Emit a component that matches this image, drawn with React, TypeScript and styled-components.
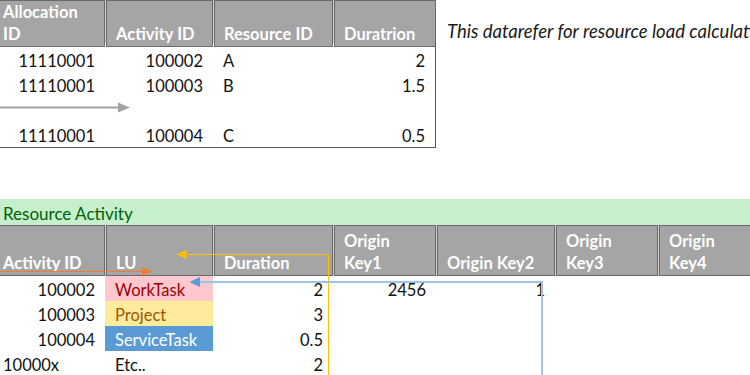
import React from 'react'
import styled, { createGlobalStyle } from 'styled-components'

const Global = createGlobalStyle`
  html, body {
    margin      : 0;
    padding     : 0;
    background  : #ffffff;
    font-family : Lato, "Open Sans", sans-serif;
    font-size   : 16.5px;
    color       : #111111;
  }
`

const Page = styled.div`
  position : relative;
  width    : 750px;
  height   : 375px;
  overflow : hidden;
`

const TopSection = styled.div`
  display     : flex;
  align-items : flex-start;
  margin-left : -7px;
`

const Note = styled.div`
  margin-left : 11px;
  padding-top : 20px;
  line-height : 22px;
  font-size   : 18.5px;
  font-style  : italic;
  white-space : nowrap;
  color       : #1a1a1a;
`

const Table = styled.div`
  display        : flex;
  flex-direction : column;
  flex-shrink    : 0;
`

const HeadRow = styled.div<{ $cols: string; $height: number }>`
  display               : grid;
  grid-template-columns : ${p => p.$cols};
  column-gap            : 1px;
  background            : #cdcdcd;
  height                : ${p => p.$height}px;
`

const HeadCell = styled.div`
  box-sizing     : border-box;
  display        : flex;
  align-items    : flex-end;
  padding        : 0 4px 1px 9px;
  border         : 1px solid #6a6a6a;
  background     : #a5a5a5;
  color          : #ffffff;
  font-weight    : 700;
  line-height    : 22px;
  white-space    : nowrap;
`

const Body = styled.div<{ $cols: string; $framed?: boolean }>`
  display               : grid;
  grid-template-columns : ${p => p.$cols};
  grid-auto-rows        : 25px;
  padding-top           : ${p => (p.$framed ? 4 : 0)}px;
  border-right          : ${p => (p.$framed ? '1px solid #555555' : 'none')};
  border-bottom         : ${p => (p.$framed ? '1px solid #555555' : 'none')};
`

type Tone = 'bad' | 'neutral' | 'accent'

const tones: Record<Tone, { bg: string; fg: string }> = {
  bad     : { bg: '#ffc7ce', fg: '#9c0006' },
  neutral : { bg: '#ffeb9c', fg: '#9c5700' },
  accent  : { bg: '#5b9bd5', fg: '#ffffff' },
}

const Cell = styled.div<{ $right?: boolean; $tone?: Tone }>`
  box-sizing  : border-box;
  padding     : 3px 10px 0 10px;
  line-height : 22px;
  white-space : nowrap;
  text-align  : ${p => (p.$right ? 'right' : 'left')};
  background  : ${p => (p.$tone ? tones[p.$tone].bg : 'transparent')};
  color       : ${p => (p.$tone ? tones[p.$tone].fg : '#111111')};
`

const Banner = styled.div`
  margin-top  : 51px;
  height      : 26px;
  box-sizing  : border-box;
  padding     : 4px 0 0 3px;
  line-height : 22px;
  font-size   : 17px;
  background  : #c6efce;
  color       : #006100;
`

const Sheet2 = styled(Table)`
  margin-left : -7px;
`

const Overlay = styled.svg`
  position       : absolute;
  left           : 0;
  top            : 0;
  pointer-events : none;
`

const topHead = '112px 107px 119px 102px'
const topBody = '112px 108px 120px 102px'
const actHead = '112px 107px 119px 102px 118px 102px 200px'
const actBody = '112px 108px 120px 103px 119px 103px 200px'

const allocations = [
  ['11110001', '100002', 'A', '2'],
  ['11110001', '100003', 'B', '1.5'],
  ['', '', '', ''],
  ['11110001', '100004', 'C', '0.5'],
]

const activities: { id: string; idRight: boolean; lu: string; tone?: Tone; dur: string; k1?: string; k2?: string }[] = [
  { id: '100002', idRight: true, lu: 'WorkTask', tone: 'bad', dur: '2', k1: '2456', k2: '1' },
  { id: '100003', idRight: true, lu: 'Project', tone: 'neutral', dur: '3' },
  { id: '100004', idRight: true, lu: 'ServiceTask', tone: 'accent', dur: '0.5' },
  { id: '10000x', idRight: false, lu: 'Etc..', dur: '2' },
]

const Arrows = () => (
  <Overlay width={750} height={375} viewBox="0 0 750 375">
    <line x1={0} y1={107.5} x2={119} y2={107.5} stroke="#a3a3a3" strokeWidth={2} />
    <polygon points="118,102.5 130,107.5 118,112.5" fill="#a3a3a3" />

    <line x1={0} y1={271.5} x2={143} y2={271.5} stroke="#ed7d31" strokeWidth={1} />
    <polygon points="142,267 152,271.5 142,276" fill="#ed7d31" />

    <polyline points="186,254.5 328.5,254.5 328.5,375" fill="none" stroke="#ffc000" strokeWidth={1} />
    <polygon points="186.5,250 176.5,254.5 186.5,259" fill="#ffc000" />

    <polyline points="199,282 542,282 542,375" fill="none" stroke="#9dc3e6" strokeWidth={2} />
    <polygon points="200,277 189.5,282 200,287" fill="#5b9bd5" />
  </Overlay>
)

export default function App() {
  return (
    <Page>
      <Global />
      <TopSection>
        <Table>
          <HeadRow $cols={topHead} $height={43}>
            <HeadCell>Allocation<br />ID</HeadCell>
            <HeadCell>Activity ID</HeadCell>
            <HeadCell>Resource ID</HeadCell>
            <HeadCell>Duratrion</HeadCell>
          </HeadRow>
          <Body $cols={topBody} $framed>
            {allocations.map((r, i) => (
              <React.Fragment key={i}>
                <Cell $right>{r[0]}</Cell>
                <Cell $right>{r[1]}</Cell>
                <Cell>{r[2]}</Cell>
                <Cell $right>{r[3]}</Cell>
              </React.Fragment>
            ))}
          </Body>
        </Table>
        <Note>This datarefer for resource load calculation</Note>
      </TopSection>

      <Banner>Resource Activity</Banner>

      <Sheet2>
        <HeadRow $cols={actHead} $height={51}>
          <HeadCell>Activity ID</HeadCell>
          <HeadCell>LU</HeadCell>
          <HeadCell>Duration</HeadCell>
          <HeadCell>Origin<br />Key1</HeadCell>
          <HeadCell>Origin Key2</HeadCell>
          <HeadCell>Origin<br />Key3</HeadCell>
          <HeadCell>Origin<br />Key4</HeadCell>
        </HeadRow>
        <Body $cols={actBody}>
          {activities.map(a => (
            <React.Fragment key={a.id}>
              <Cell $right={a.idRight}>{a.id}</Cell>
              <Cell $tone={a.tone}>{a.lu}</Cell>
              <Cell $right>{a.dur}</Cell>
              <Cell $right>{a.k1}</Cell>
              <Cell $right>{a.k2}</Cell>
              <Cell />
              <Cell />
            </React.Fragment>
          ))}
        </Body>
      </Sheet2>

      <Arrows />
    </Page>
  )
}
